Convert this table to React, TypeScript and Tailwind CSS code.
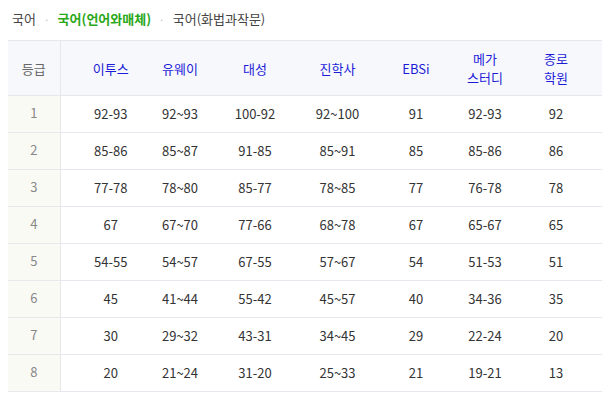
import React from 'react';

const rows: string[][] = [
  ['1', '92-93', '92~93', '100-92', '92~100', '91', '92-93', '92'],
  ['2', '85-86', '85~87', '91-85', '85~91', '85', '85-86', '86'],
  ['3', '77-78', '78~80', '85-77', '78~85', '77', '76-78', '78'],
  ['4', '67', '67~70', '77-66', '68~78', '67', '65-67', '65'],
  ['5', '54-55', '54~57', '67-55', '57~67', '54', '51-53', '51'],
  ['6', '45', '41~44', '55-42', '45~57', '40', '34-36', '35'],
  ['7', '30', '29~32', '43-31', '34~45', '29', '22-24', '20'],
  ['8', '20', '21~24', '31-20', '25~33', '21', '19-21', '13'],
];

const App: React.FC = () => {
  return (
    <div
      className="w-[612px] h-[401px] bg-white text-[13px] text-[#333]"
      style={{ fontFamily: '"Noto Sans CJK KR", "Noto Sans", sans-serif' }}
    >
      <div className="flex items-center h-[40px] pl-[12px] pb-[2px] gap-[8px] text-[#444]">
        <span>국어</span>
        <span className="text-[#bbb] text-[10px]">·</span>
        <span className="text-[#2aa81a] font-bold">국어(언어와매체)</span>
        <span className="text-[#bbb] text-[10px]">·</span>
        <span>국어(화법과작문)</span>
      </div>
      <table className="ml-[8px] w-[594px] table-fixed border-collapse">
        <colgroup>
          <col className="w-[52px]" />
          <col className="w-[85px]" />
          <col className="w-[70px]" />
          <col className="w-[80px]" />
          <col className="w-[85px]" />
          <col className="w-[72px]" />
          <col className="w-[66px]" />
          <col className="w-[84px]" />
        </colgroup>
        <thead>
          <tr className="h-[55px] bg-[#f7f8fb] border-t border-b border-[#e6e8ee] leading-[19px]">
            <th className="font-normal text-[#666] border-r border-[#e6e8ee]">등급</th>
            <th className="font-normal text-[#1c1cd8] pl-[16px]">이투스</th>
            <th className="font-normal text-[#1c1cd8]">유웨이</th>
            <th className="font-normal text-[#1c1cd8]">대성</th>
            <th className="font-normal text-[#1c1cd8]">진학사</th>
            <th className="font-normal text-[#1c1cd8]">EBSi</th>
            <th className="font-normal text-[#1c1cd8]">메가<br />스터디</th>
            <th className="font-normal text-[#1c1cd8] pr-[8px]">종로<br />학원</th>
          </tr>
        </thead>
        <tbody>
          {rows.map(row => (
            <tr key={row[0]} className="h-[37px] border-b border-[#e6e8ee]">
              <td className="text-center text-[#888] bg-[#fafaf5] border-r border-[#e6e8ee] pb-[3px]">{row[0]}</td>
              {row.slice(1).map((cell, i) => (
                <td
                  key={i}
                  className={
                    i === 0
                      ? 'text-center pl-[16px]'
                      : i === 6
                      ? 'text-center pr-[8px]'
                      : 'text-center'
                  }
                >
                  {cell}
                </td>
              ))}
            </tr>
          ))}
        </tbody>
      </table>
    </div>
  );
};

export default App;
